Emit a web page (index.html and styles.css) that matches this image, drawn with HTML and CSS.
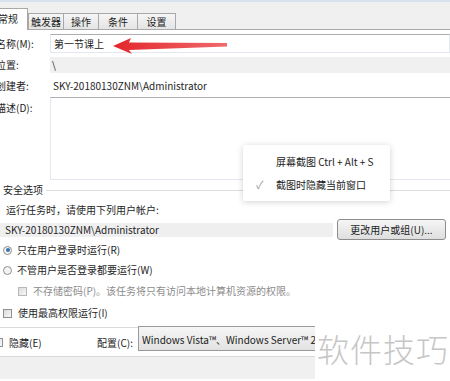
FILE: index.html
```html
<!doctype html>
<html lang="zh">
<head>
    <meta charset="utf-8">
    <title>创建任务</title>
    <link rel="stylesheet" href="styles.css">
</head>
<body>
    <div class="tabbar">
        <div class="tab active">常规</div>
        <div class="tab t1">触发器</div>
        <div class="tab t2">操作</div>
        <div class="tab t3">条件</div>
        <div class="tab t4">设置</div>
    </div>

    <div class="general">
        <div class="row r-name">
            <label class="lbl">名称(M):</label>
            <div class="field input">第一节课上</div>
        </div>
        <div class="row r-loc">
            <label class="lbl">位置:</label>
            <div class="field readonly">\</div>
        </div>
        <div class="row r-author">
            <label class="lbl">创建者:</label>
            <div class="field plain">SKY-20180130ZNM\Administrator</div>
        </div>
        <div class="row r-desc">
            <label class="lbl">描述(D):</label>
            <div class="field textarea"></div>
        </div>
    </div>

    <div class="security">
        <div class="group-title">安全选项</div>
        <div class="line hint">运行任务时，请使用下列用户帐户:</div>
        <div class="account">
            <div class="account-box">SKY-20180130ZNM\Administrator</div>
            <button class="btn">更改用户或组(U)...</button>
        </div>
        <div class="line opt"><span class="radio on"></span>只在用户登录时运行(R)</div>
        <div class="line opt"><span class="radio"></span>不管用户是否登录都要运行(W)</div>
        <div class="line opt sub disabled"><span class="check"></span>不存储密码(P)。该任务将只有访问本地计算机资源的权限。</div>
        <div class="line opt top"><span class="check"></span>使用最高权限运行(I)</div>
    </div>

    <div class="bottomrow">
        <div class="hidden-opt"><span class="check"></span>隐藏(E)</div>
        <label class="cfg-lbl">配置(C):</label>
        <div class="combo">Windows Vista™、Windows Server™ 2008</div>
    </div>
    <div class="footer"></div>

    <!-- overlays -->
    <svg class="arrow" width="120" height="20" viewBox="110 36 120 20">
        <defs>
            <linearGradient id="ag" x1="0" x2="1">
                <stop offset="0" stop-color="#e3262b"/>
                <stop offset="1" stop-color="#f06a6c"/>
            </linearGradient>
        </defs>
        <path d="M113 46 L131 38 L129 42.5 L227 43 L227 46.5 L129 50 L132 54 Z" fill="url(#ag)"/>
    </svg>

    <div class="menu">
        <div class="menu-item">屏幕截图 Ctrl + Alt + S</div>
        <div class="menu-item"><span class="tick">✓</span>截图时隐藏当前窗口</div>
    </div>

    <div class="watermark">软件技巧</div>
</body>
</html>
```

FILE: styles.css
```css
body {
    margin: 0;
    width: 450px;
    height: 381px;
    overflow: hidden;
    position: relative;
    background: #fff;
    color: #1e1e1e;
    font-family: "Noto Sans CJK SC", sans-serif;
    font-size: 10px;
    line-height: 1;
}

/* tabs */
.tabbar {
    height: 30px;
    box-sizing: border-box;
    border-top: 2px solid #d7e2ee;
    border-bottom: 1px solid #a9a9a9;
    background: #f0f0f0;
    display: flex;
    align-items: flex-end;
}

.tab {
    height: 16px;
    box-sizing: border-box;
    border: 1px solid #a8a8a8;
    border-bottom: none;
    background: linear-gradient(#f5f5f5, #e4e4e4);
    display: flex;
    align-items: center;
    justify-content: center;
    margin-left: -1px;
}

.tab.active {
    height: 22px;
    width: 40px;
    margin-left: -12px;
    margin-bottom: -1px;
    background: #fff;
    align-items: flex-start;
    padding-top: 5px;
}

.t1 { width: 36px; margin-left: 0; }
.t2 { width: 36px; }
.t3 { width: 40px; }
.t4 { width: 39px; }

/* general fields */
.general {
    margin-left: -4px;
}

.row {
    display: flex;
    align-items: center;
}

.lbl {
    width: 54px;
    flex: none;
}

.field {
    flex: 1;
    box-sizing: border-box;
    padding-left: 2px;
}

.r-name { margin-top: 4px; height: 19px; }
.r-loc { margin-top: 4px; height: 16px; }
.r-author { margin-top: 2px; height: 22px; }
.r-desc { height: 83px; align-items: flex-start; }
.r-desc .lbl { padding-top: 6px; }

.input {
    height: 19px;
    border: 1px solid #e2e8ee;
    border-top-color: #abadb3;
    display: flex;
    align-items: center;
    padding-left: 3px;
}

.readonly {
    height: 16px;
    background: #f0f0f0;
    display: flex;
    align-items: center;
}

.plain { padding-left: 3px; }

.textarea {
    height: 83px;
    border: 1px solid #e2e8ee;
    border-top-color: #abadb3;
    border-right: none;
}

/* security group */
.group-title {
    height: 20px;
    display: flex;
    align-items: center;
    padding-left: 3px;
}

.group-title::after {
    content: "";
    flex: 1;
    margin-left: 3px;
    border-top: 1px solid #dcdcdc;
}

.line {
    height: 20px;
    display: flex;
    align-items: center;
}

.hint { padding-left: 6px; }

.account {
    height: 21px;
    display: flex;
    align-items: center;
    margin-top: -1px;
}

.account-box {
    width: 333px;
    height: 14px;
    background: #efefef;
    display: flex;
    align-items: center;
    padding-left: 5px;
    box-sizing: border-box;
}

.btn {
    margin-left: 4px;
    width: 109px;
    height: 21px;
    border: 1px solid #8d8d8d;
    border-radius: 3px;
    background: linear-gradient(#f6f6f6, #dedede);
    font: inherit;
    color: #1e1e1e;
    padding: 0;
}

.opt { padding-left: 3px; }
.opt.sub { padding-left: 18px; margin-top: 1px; }
.opt.top { margin-top: 2px; }
.disabled { color: #8c8c8c; }

.radio {
    width: 9px;
    height: 9px;
    box-sizing: border-box;
    border: 1px solid #8e8f8f;
    border-radius: 50%;
    background: #f4f4f4;
    margin-right: 5px;
    position: relative;
}

.radio.on::after {
    content: "";
    position: absolute;
    left: 1.5px;
    top: 1.5px;
    width: 4px;
    height: 4px;
    border-radius: 50%;
    background: #3a6fb0;
}

.check {
    width: 9px;
    height: 9px;
    box-sizing: border-box;
    border: 1px solid #8e8f8f;
    background: linear-gradient(135deg, #dcdcdc, #f8f8f8);
    margin-right: 6px;
}

.disabled .check { border-color: #b8b8b8; }

/* bottom row */
.bottomrow {
    margin-top: 4px;
    height: 30px;
    box-sizing: border-box;
    border-top: 1px solid #dadada;
    border-bottom: 1px solid #dadada;
    display: flex;
    align-items: center;
    padding-top: 1px;
}

.hidden-opt {
    display: flex;
    align-items: center;
    margin-left: -6px;
    width: 103px;
}

.cfg-lbl { width: 41px; }

.combo {
    align-self: flex-start;
    margin-top: -3px;
    height: 25px;
    flex: 1;
    box-sizing: border-box;
    border: 1px solid #9a9a9a;
    background: linear-gradient(#f6f6f6, #e2e2e2);
    display: flex;
    align-items: center;
    padding: 3px 0 0 3px;
    white-space: nowrap;
    overflow: hidden;
    color: #222;
}

.footer {
    height: 22px;
    background: #f0f0f0;
}

/* overlays */
.arrow {
    position: absolute;
    left: 110px;
    top: 36px;
}

.menu {
    position: absolute;
    left: 243px;
    top: 145px;
    width: 147px;
    height: 56px;
    background: #fff;
    border-radius: 2px;
    box-shadow: 0 1px 6px rgba(0, 0, 0, 0.18);
    padding-top: 5px;
    box-sizing: border-box;
}

.menu-item {
    height: 23px;
    display: flex;
    align-items: center;
    padding-left: 33px;
    position: relative;
    color: #222;
}

.tick {
    position: absolute;
    left: 13px;
    color: #9a9a9a;
    font-size: 11px;
}

.watermark {
    position: absolute;
    left: 315px;
    top: 325px;
    width: 135px;
    height: 56px;
    background: #fff;
    color: #c6c6c6;
    font-size: 32px;
    font-weight: 300;
    padding-left: 2px;
    padding-top: 7px;
    box-sizing: border-box;
    letter-spacing: 1px;
}
```
